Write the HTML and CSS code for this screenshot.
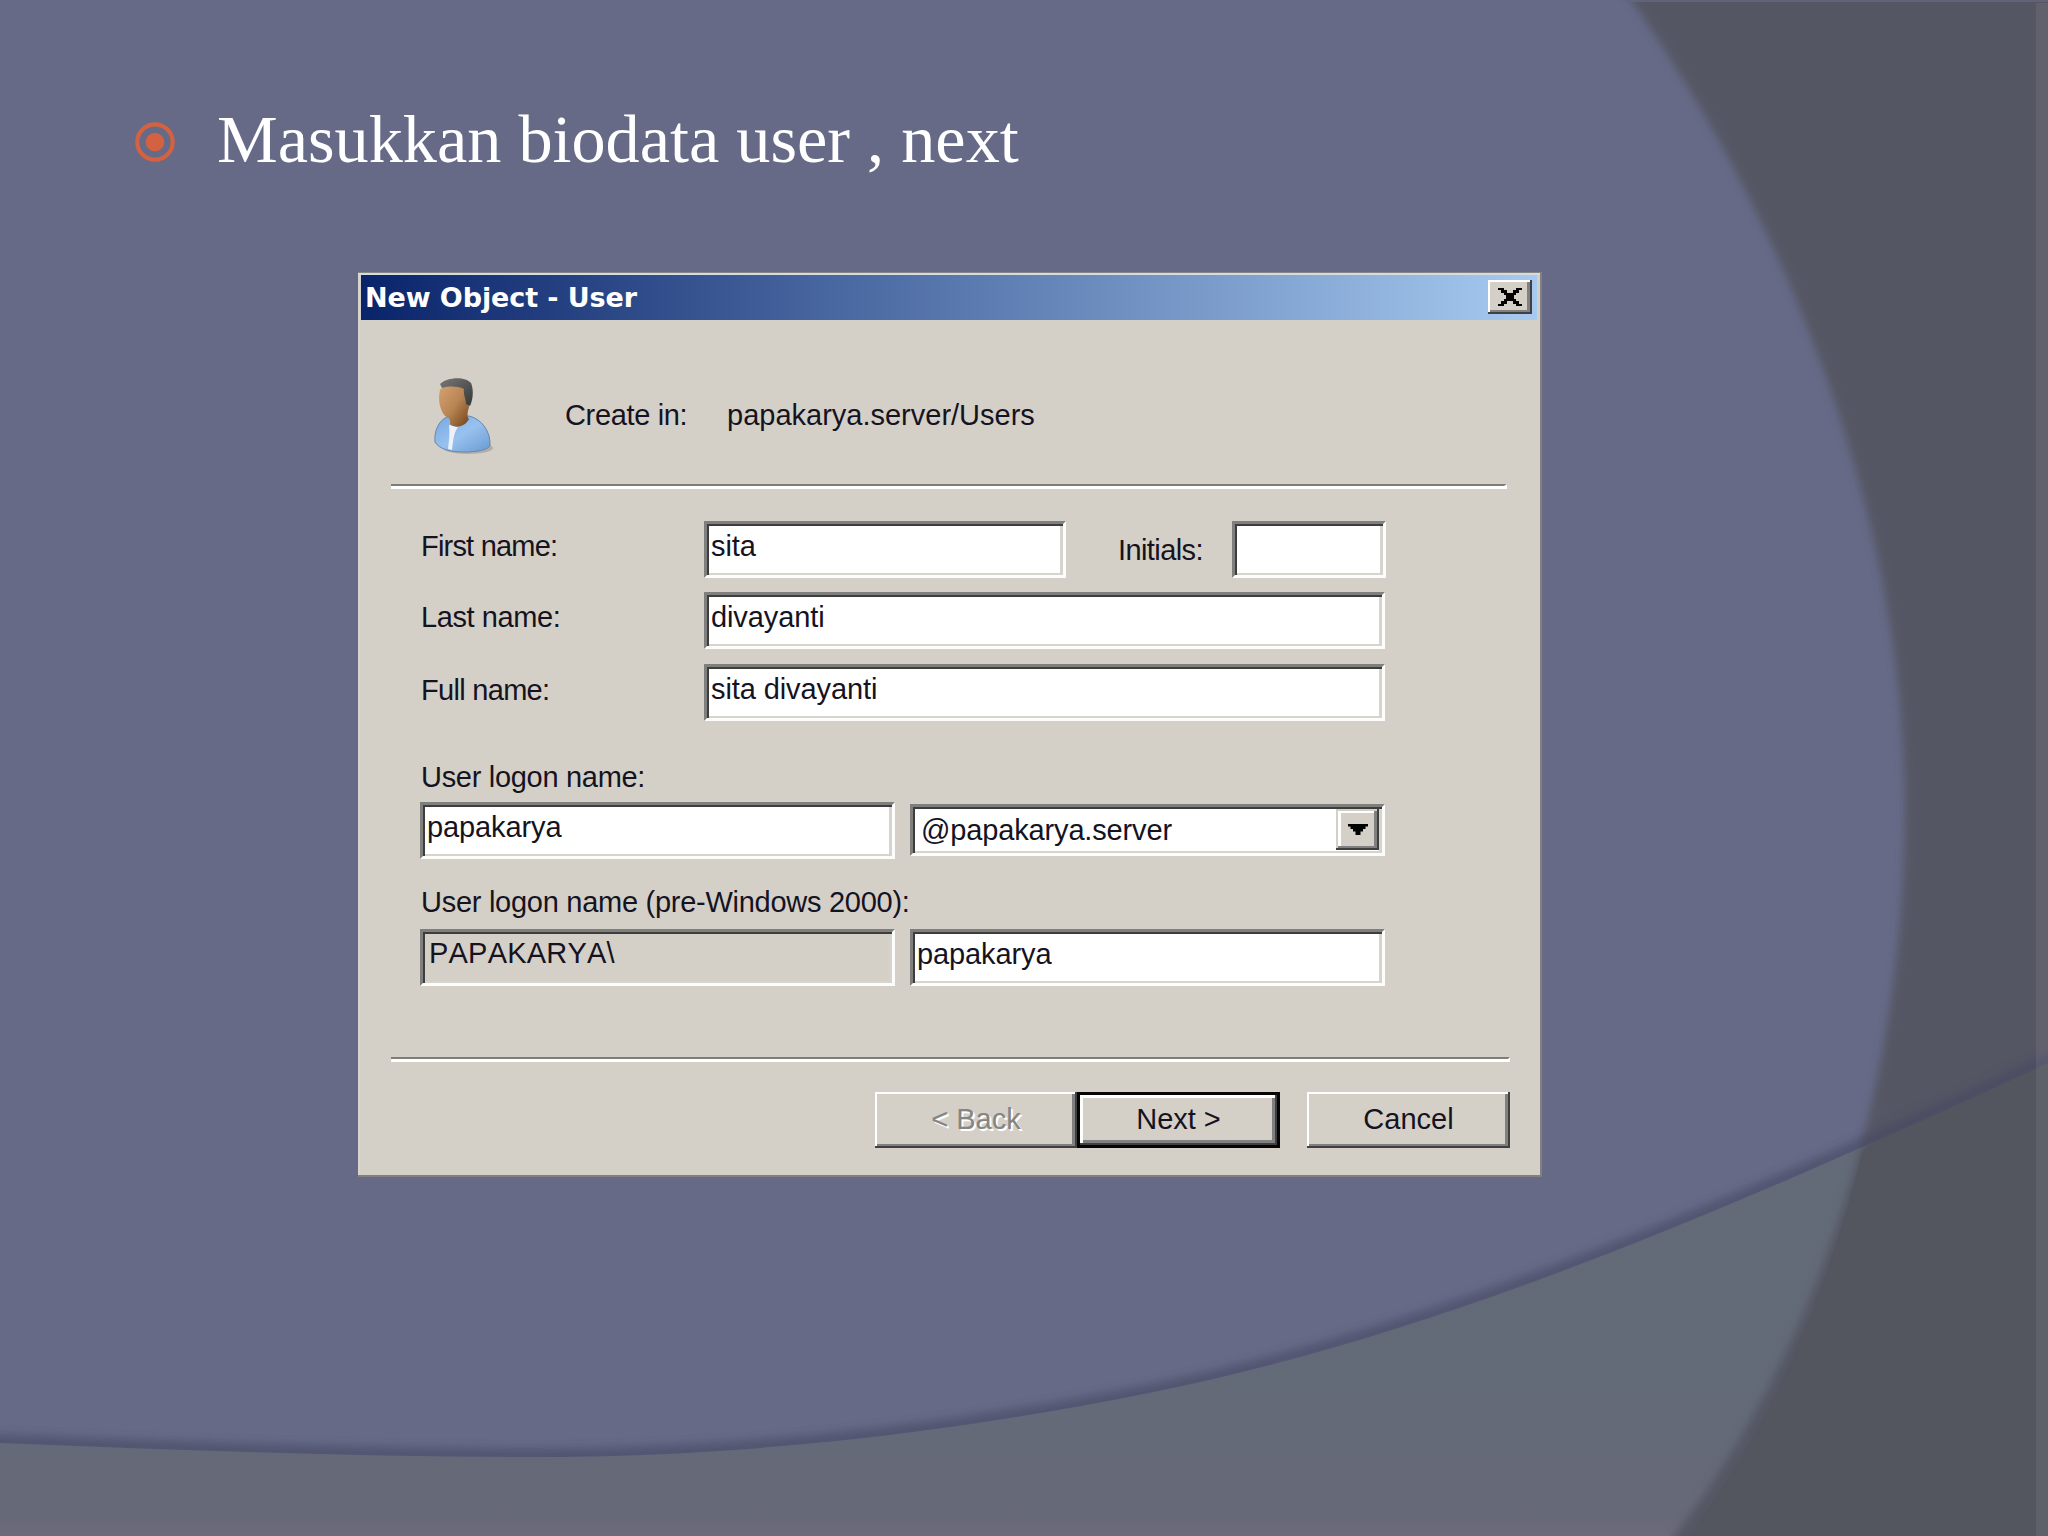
FILE: index.html
```html
<!DOCTYPE html>
<html lang="id">
<head>
<meta charset="utf-8">
<title>Masukkan biodata user</title>
<link rel="stylesheet" href="styles.css">
</head>
<body>
<main class="slide">
  <svg class="backdrop" viewBox="0 0 2048 1536" aria-hidden="true">
    <defs>
      <filter id="soft" x="-5%" y="-5%" width="110%" height="110%"><feGaussianBlur stdDeviation="4"/></filter>
      <filter id="shade" x="-5%" y="-10%" width="110%" height="120%"><feGaussianBlur stdDeviation="4"/></filter>
      <clipPath id="above"><path d="M0 0H2048V1063C1750 1200 1450 1333 1149 1393C945 1434 740 1457 536 1457C360 1457 180 1450 0 1443Z"/></clipPath>
      <linearGradient id="swoosh" x1="0" y1="0" x2="0" y2="1"><stop offset="0" stop-color="#626b77"/><stop offset=".78" stop-color="#646a77"/><stop offset=".96" stop-color="#676978"/><stop offset="1" stop-color="#6b6b7b"/></linearGradient>
    </defs>
    <path fill="url(#swoosh)" d="M0 1443C180 1450 360 1457 536 1457C740 1457 945 1434 1149 1393C1450 1333 1750 1200 2048 1063V1536H0Z"/>
    <path fill="#545663" filter="url(#soft)" d="M1615 -15L1631 0C1799 240 1903 530 1905 800C1907 1080 1818 1350 1674 1536L1664 1560H2100V-15Z"/>
    <path fill="#53565e" d="M1872 1144C1925 1120 1988 1091 2048 1063V1536H1688C1770 1430 1829 1290 1862 1152Z"/>
    <g clip-path="url(#above)"><path fill="none" stroke="#454962" stroke-opacity=".6" stroke-width="16" filter="url(#shade)" d="M-20 1441C180 1449 360 1456 536 1456C740 1456 945 1433 1149 1392C1450 1332 1750 1199 2068 1052"/></g>
    <path fill="#fff" fill-opacity=".07" d="M2036 3H2048V1536H2036Z"/>
    <path fill="#676a88" fill-opacity=".6" d="M1630 0H2048V2H1630Z"/>
  </svg>

  <header class="heading">
    <svg class="bullet" viewBox="0 0 42 42" aria-hidden="true"><circle cx="21" cy="21" r="17.700" fill="none" stroke="#d4613f" stroke-width="4.2"/><circle cx="21" cy="21" r="9.3" fill="#d4613f"/></svg>
    <h1>Masukkan biodata user , next</h1>
  </header>

  <section class="dialog">
    <div class="titlebar">
      <span class="title">New Object - User</span>
      <span class="close"><svg viewBox="0 0 24 18" aria-hidden="true"><path d="M0 0H6V2H9V5H15V2H18V0H24V2H21V5H18V7H16V11H18V13H21V16H24V18H18V16H15V13H9V16H6V18H0V16H3V13H6V11H8V7H6V5H3V2H0Z"/></svg></span>
    </div>

    <div class="create">
      <svg class="user" viewBox="0 0 60 78" aria-hidden="true">
        <defs>
          <linearGradient id="coat" x1="0" y1="0" x2="1" y2="1"><stop offset="0" stop-color="#77a8df"/><stop offset=".5" stop-color="#98c1ef"/><stop offset="1" stop-color="#6b9ad0"/></linearGradient>
          <linearGradient id="skin" x1="0" y1="0" x2="1" y2="1"><stop offset="0" stop-color="#d5a273"/><stop offset=".5" stop-color="#b98553"/><stop offset="1" stop-color="#714319"/></linearGradient>
          <linearGradient id="hair" x1="0" y1="0" x2="1" y2="1"><stop offset="0" stop-color="#777876"/><stop offset="1" stop-color="#363839"/></linearGradient>
        </defs>
        <ellipse cx="35" cy="71" rx="25" ry="6" fill="#8d8c87" opacity=".5"/>
        <path fill="url(#coat)" stroke="#6288b0" d="M14 40C5 44 1 55 2 65C6 72 17 75 31 75C44 75 54 73 57 69C58 55 49 42 36 39Z"/>
        <path fill="#eef2f8" d="M16 48L25 50C20 57 20 66 19 73L15 72C16 64 17 56 16 48Z"/>
        <path fill="url(#skin)" d="M7 13C12 7 26 7 33 12L36 30C34 36 34 40 36 42C32 50 22 52 17 47C18 43 16 41 12 39C6 32 5 21 7 13Z"/>
        <path fill="url(#hair)" d="M7 7C14 0 32 -1 38 6C41 13 40 23 37 29L33 27C33 21 30 18 31 12C24 9 16 9 9 11Z"/>
      </svg>
      <span class="create-label">Create in:</span>
      <span class="path">papakarya.server/Users</span>
    </div>

    <div class="rule rule-top"></div>

    <form class="form">
      <div class="row">
        <label class="caption caption-first">First name:</label>
        <div class="field field-first">sita</div>
        <label class="initials-label">Initials:</label>
        <div class="field field-initials"></div>
      </div>
      <div class="row row-last">
        <label class="caption">Last name:</label>
        <div class="field field-wide">divayanti</div>
      </div>
      <div class="row row-full">
        <label class="caption caption-full">Full name:</label>
        <div class="field field-wide">sita divayanti</div>
      </div>
      <label class="line logon-label">User logon name:</label>
      <div class="row row-logon">
        <div class="field field-half">papakarya</div>
        <div class="field combo"><span>@papakarya.server</span><i class="drop"><svg viewBox="0 0 20 11" aria-hidden="true"><path d="M0 0H20V2.500H17.500V5H15V7.500H12.500V11H7.500V7.500H5V5H2.500V2.500H0Z"/></svg></i></div>
      </div>
      <label class="line pre-label">User logon name (pre-Windows 2000):</label>
      <div class="row row-pre">
        <div class="field field-half readonly">PAPAKARYA\</div>
        <div class="field field-pre">papakarya</div>
      </div>
    </form>

    <div class="rule rule-bottom"></div>

    <div class="actions">
      <span class="button back">&lt; Back</span>
      <span class="button next">Next &gt;</span>
      <span class="button cancel">Cancel</span>
    </div>
  </section>
</main>
</body>
</html>
```
FILE: styles.css
```css
* { box-sizing: border-box; }
body { margin: 0; }

.slide {
  position: relative;
  width: 2048px;
  height: 1536px;
  overflow: hidden;
  background: #666a87;
}
.backdrop { position: absolute; inset: 0; width: 2048px; height: 1536px; }

.heading {
  position: relative;
  display: flex;
  height: 273px;
  padding: 99px 0 0 134px;
}
.bullet { width: 42px; height: 42px; margin-top: 22px; }
.heading h1 {
  margin: 0 0 0 41px;
  color: #fff;
  font: 400 68.270px/80px "Liberation Serif", serif;
  white-space: nowrap;
}

.dialog {
  position: relative;
  width: 1184px;
  height: 904px;
  margin-left: 358px;
  border: solid #7f807f;
  border-width: 0 2px 2px 0;
  background: #d4d0c8;
  box-shadow: inset 0 2px #d6dbdc, inset 2px 0 #d8d5cf, 0 -1px #858689;
  padding: 2px 3px 0 3px;
  color: #15131f;
  font: 29px/32px "Liberation Sans", Arial, sans-serif;
  font-kerning: none;
  white-space: nowrap;
}

.titlebar {
  display: flex;
  justify-content: space-between;
  height: 45px;
  padding: 5px 5px 0 4px;
  background: linear-gradient(90deg, #0a246a, #a6caf0);
}
.title {
  color: #fff;
  font: 700 27px/32px "DejaVu Sans", sans-serif;
  padding-top: 2px;
  letter-spacing: -.1px;
}
.close {
  display: flex;
  justify-content: center;
  width: 44px;
  height: 34px;
  padding: 8px 1px 0 0;
  background: #d4d0c8;
  box-shadow: inset -2px -2px #404040, inset 2px 2px #fff, inset -5px -4px #808080;
}
.close svg { width: 24px; height: 18px; }

.create { display: flex; height: 164px; padding-left: 72px; }
.user { width: 60px; height: 78px; margin-top: 57px; }
.create-label { margin: 79px 0 0 72px; width: 162px; letter-spacing: -.35px; }
.path { margin-top: 79px; }

.rule { height: 5px; border-top: 2.500px solid #7f7d78; background: #fff; }
.rule-top { width: 1116px; margin-left: 30px; border-right: 3px solid #fff; }
.rule-bottom { width: 1119px; margin: 71px 0 0 30px; border-right: 2px solid #fff; }

.form { display: block; padding: 32px 0 0 59px; }
.row { display: flex; }
.row-last { margin-top: 14px; }
.row-full { margin-top: 15px; }
.caption { width: 284px; padding: 9px 0 0 1px; letter-spacing: -.4px; }
.caption-first { letter-spacing: -.8px; }
.caption-full { padding-top: 10px; letter-spacing: -.7px; }

.field {
  height: 57px;
  padding: 6px 0 0 4px;
  border: 3px solid;
  border-color: #7f7f7d #fdfdfc #fdfdfc #7f7f7d;
  background: #fff;
  box-shadow: inset 2px 2px #3d3d3d, inset -3px -2px #d7d3cd;
  letter-spacing: -.1px;
}
.field-first { width: 362px; }
.initials-label { width: 114px; margin-left: 52px; padding-top: 13px; letter-spacing: -.6px; }
.field-initials { width: 154px; }
.field-wide { width: 681px; }
.field-half { width: 475px; }

.line { display: block; padding-left: 1px; }
.logon-label { margin-top: 40px; letter-spacing: -.3px; }
.row-logon { margin-top: 9px; }
.combo {
  display: flex;
  justify-content: space-between;
  width: 475px;
  height: 52px;
  margin: 2px 0 0 15px;
  padding: 7px 3px 0 8px;
  letter-spacing: -.15px;
}
.drop {
  display: flex;
  justify-content: center;
  width: 43px;
  height: 41px;
  margin-top: -5px;
  padding-top: 15px;
  background: #d4d0c8;
  box-shadow: inset -2px -2px #404040, inset 2px 2px #d4d0c8, inset -5px -4px #808080, inset 5px 4px #fff;
}
.drop svg { width: 20px; height: 11px; }
.pre-label { margin-top: 27px; letter-spacing: -.27px; }
.row-pre { margin-top: 11px; }
.readonly { background: #d4d0c8; letter-spacing: .2px; padding: 5px 0 0 6px; }
.field-pre { width: 475px; margin-left: 15px; }

.actions { display: flex; margin: 30px 0 0 514px; }
.button {
  width: 203px;
  height: 56px;
  padding-top: 11px;
  text-align: center;
  box-shadow: inset -2px -2px #404040, inset 2px 2px #fff, inset -5px -4px #808080;
}
.back { width: 202px; color: #858582; text-shadow: 2px 2px #fff; }
.next {
  border: 3px solid #050505;
  padding-top: 8px;
  box-shadow: inset -2px -2px #404040, inset 3px 3px #fff, inset -5px -5px #808080;
}
.cancel { margin-left: 27px; }
```
